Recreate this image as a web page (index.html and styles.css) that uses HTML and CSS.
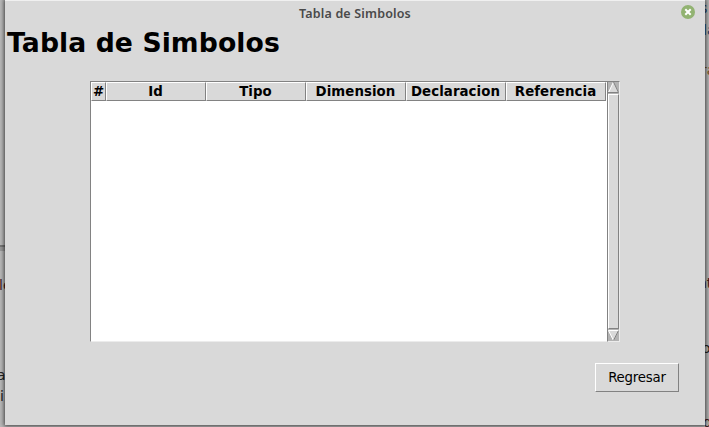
FILE: index.html
```html
<!DOCTYPE html>
<html lang="es">
<head>
<meta charset="utf-8">
<title>Tabla de Simbolos</title>
<link rel="stylesheet" href="styles.css">
</head>
<body>
<div class="desktop">
  <div class="behind behind-left">
    <i class="rule"></i>
    <span class="frag l1">le</span>
    <span class="frag l2">a</span>
    <span class="frag l3">i</span>
  </div>
  <div class="behind behind-right">
    <span class="frag r1">s</span>
    <span class="frag r2">la</span>
    <span class="frag r3">ra</span>
    <span class="frag r4">nt</span>
    <span class="frag r5">o</span>
    <span class="frag r6">d</span>
  </div>
  <main class="window">
    <header class="titlebar">
      <span class="caption">Tabla de Simbolos</span>
      <svg class="close" viewBox="0 0 14 14"><circle cx="7" cy="7" r="7"/><path d="M4.3 4.3l5.4 5.4M9.7 4.3l-5.4 5.4"/></svg>
    </header>
    <h1>Tabla de Simbolos</h1>
    <section class="table">
      <div class="tree">
        <div class="head">
          <span>#</span><span>Id</span><span>Tipo</span><span>Dimension</span><span>Declaracion</span><span>Referencia</span>
        </div>
      </div>
      <div class="scrollbar">
        <svg class="arrow" viewBox="0 0 11 11"><path class="face" d="M5.5 0L11 11H0z"/><path class="light" d="M5.5 0L.5 10.5"/><path class="dark" d="M5.5 0l5 10.5H0"/></svg>
        <div class="thumb"></div>
        <svg class="arrow" viewBox="0 0 11 11"><path class="face" d="M0 0h11L5.5 11z"/><path class="light" d="M11 .5H.5l5 10"/><path class="dark" d="M10.5 .5l-5 10"/></svg>
      </div>
    </section>
    <button class="back">Regresar</button>
  </main>
</div>
</body>
</html>
```
FILE: styles.css
```css
* { box-sizing: border-box; }
body { margin: 0; }
.desktop {
  position: relative;
  width: 709px;
  height: 427px;
  padding: 0 4px 2px 5px;
  overflow: hidden;
  background: #b8b8b8;
}
.behind { position: absolute; top: 0; height: 427px; overflow: hidden; }
.behind-left { left: 0; width: 5px; }
.behind-right { right: 0; width: 4px; background: #b4b4b4; }
.rule {
  position: absolute;
  top: 245px;
  width: 5px;
  height: 6px;
  border-top: 2px solid #777;
  background: #999;
}
.frag {
  position: absolute;
  font: 14px/16px "DejaVu Sans", sans-serif;
  color: #222;
}
.l1 { left: -1px; top: 277px; color: #401818; }
.l2 { left: -3px; top: 367px; }
.l3 { left: 0; top: 388px; }
.r1 { left: -5px; top: 0; color: #173b63; }
.r2 { left: -2px; top: 22px; color: #173b63; }
.r3 { left: -4px; top: 62px; color: #765018; }
.r4 { left: -7px; top: 275px; color: #401818; }
.r5 { left: -3px; top: 340px; }
.r6 { left: -2px; top: 414px; color: #401818; }
.window {
  position: relative;
  display: flex;
  flex-direction: column;
  width: 700px;
  height: 425px;
  border-top: 1px solid #f0f0f0;
  background: #d9d9d9;
  box-shadow: 0 0 4px 1px rgba(0, 0, 0, .65);
}
.titlebar {
  display: grid;
  grid-template-columns: 24px 1fr 24px;
  align-items: start;
  height: 24px;
}
.caption {
  grid-column: 2;
  padding-top: 1px;
  text-align: center;
  font: 600 12.5px/23px "Noto Sans", sans-serif;
  letter-spacing: .16px;
  color: #4a4a4a;
}
.close { width: 14px; height: 14px; margin-top: 4px; }
.close circle { fill: #92b372; }
.close path { stroke: #fff; stroke-width: 2; }
h1 {
  height: 36px;
  margin: 0 0 20px 2px;
  font: bold 26.67px/36px "DejaVu Sans", sans-serif;
  letter-spacing: .08px;
  color: #000;
}
.table { display: flex; width: 530px; height: 261px; margin-left: 85px; }
.tree {
  width: 517px;
  border-top: 1px solid #828282;
  border-left: 1px solid #828282;
  border-bottom: 1px solid #ececec;
  background: #fff;
}
.head {
  display: grid;
  grid-template-columns: 15px repeat(5, 100px);
  height: 19px;
}
.head span {
  border: 1px solid #fff;
  border-right-color: #828282;
  border-bottom-color: #828282;
  background: #d9d9d9;
  text-align: center;
  font: bold 13.33px/17px "DejaVu Sans", sans-serif;
  color: #000;
  white-space: nowrap;
}
.head span:not(:first-child) { padding-right: 1px; letter-spacing: .07px; }
.scrollbar {
  display: flex;
  flex-direction: column;
  width: 13px;
  border: 1px solid #828282;
  border-right-color: #ececec;
  border-bottom-color: #ececec;
  background: #b3b3b3;
}
.arrow { width: 11px; height: 11px; }
.arrow path { fill: none; stroke-width: 1; }
.arrow .face { fill: #d9d9d9; }
.arrow .light { stroke: #fff; }
.arrow .dark { stroke: #828282; }
.thumb {
  flex: 1;
  margin: 1px 0;
  border: 1px solid #fff;
  border-right-color: #828282;
  border-bottom-color: #828282;
  background: #d9d9d9;
}
.back {
  align-self: flex-end;
  width: 84px;
  height: 29px;
  margin: 21px 26px 0 0;
  padding: 0;
  border: 1px solid #fff;
  border-right-color: #828282;
  border-bottom-color: #828282;
  border-radius: 0;
  background: #d9d9d9;
  font: 13.33px/27px "DejaVu Sans", sans-serif;
  letter-spacing: -.2px;
  color: #000;
}
```
